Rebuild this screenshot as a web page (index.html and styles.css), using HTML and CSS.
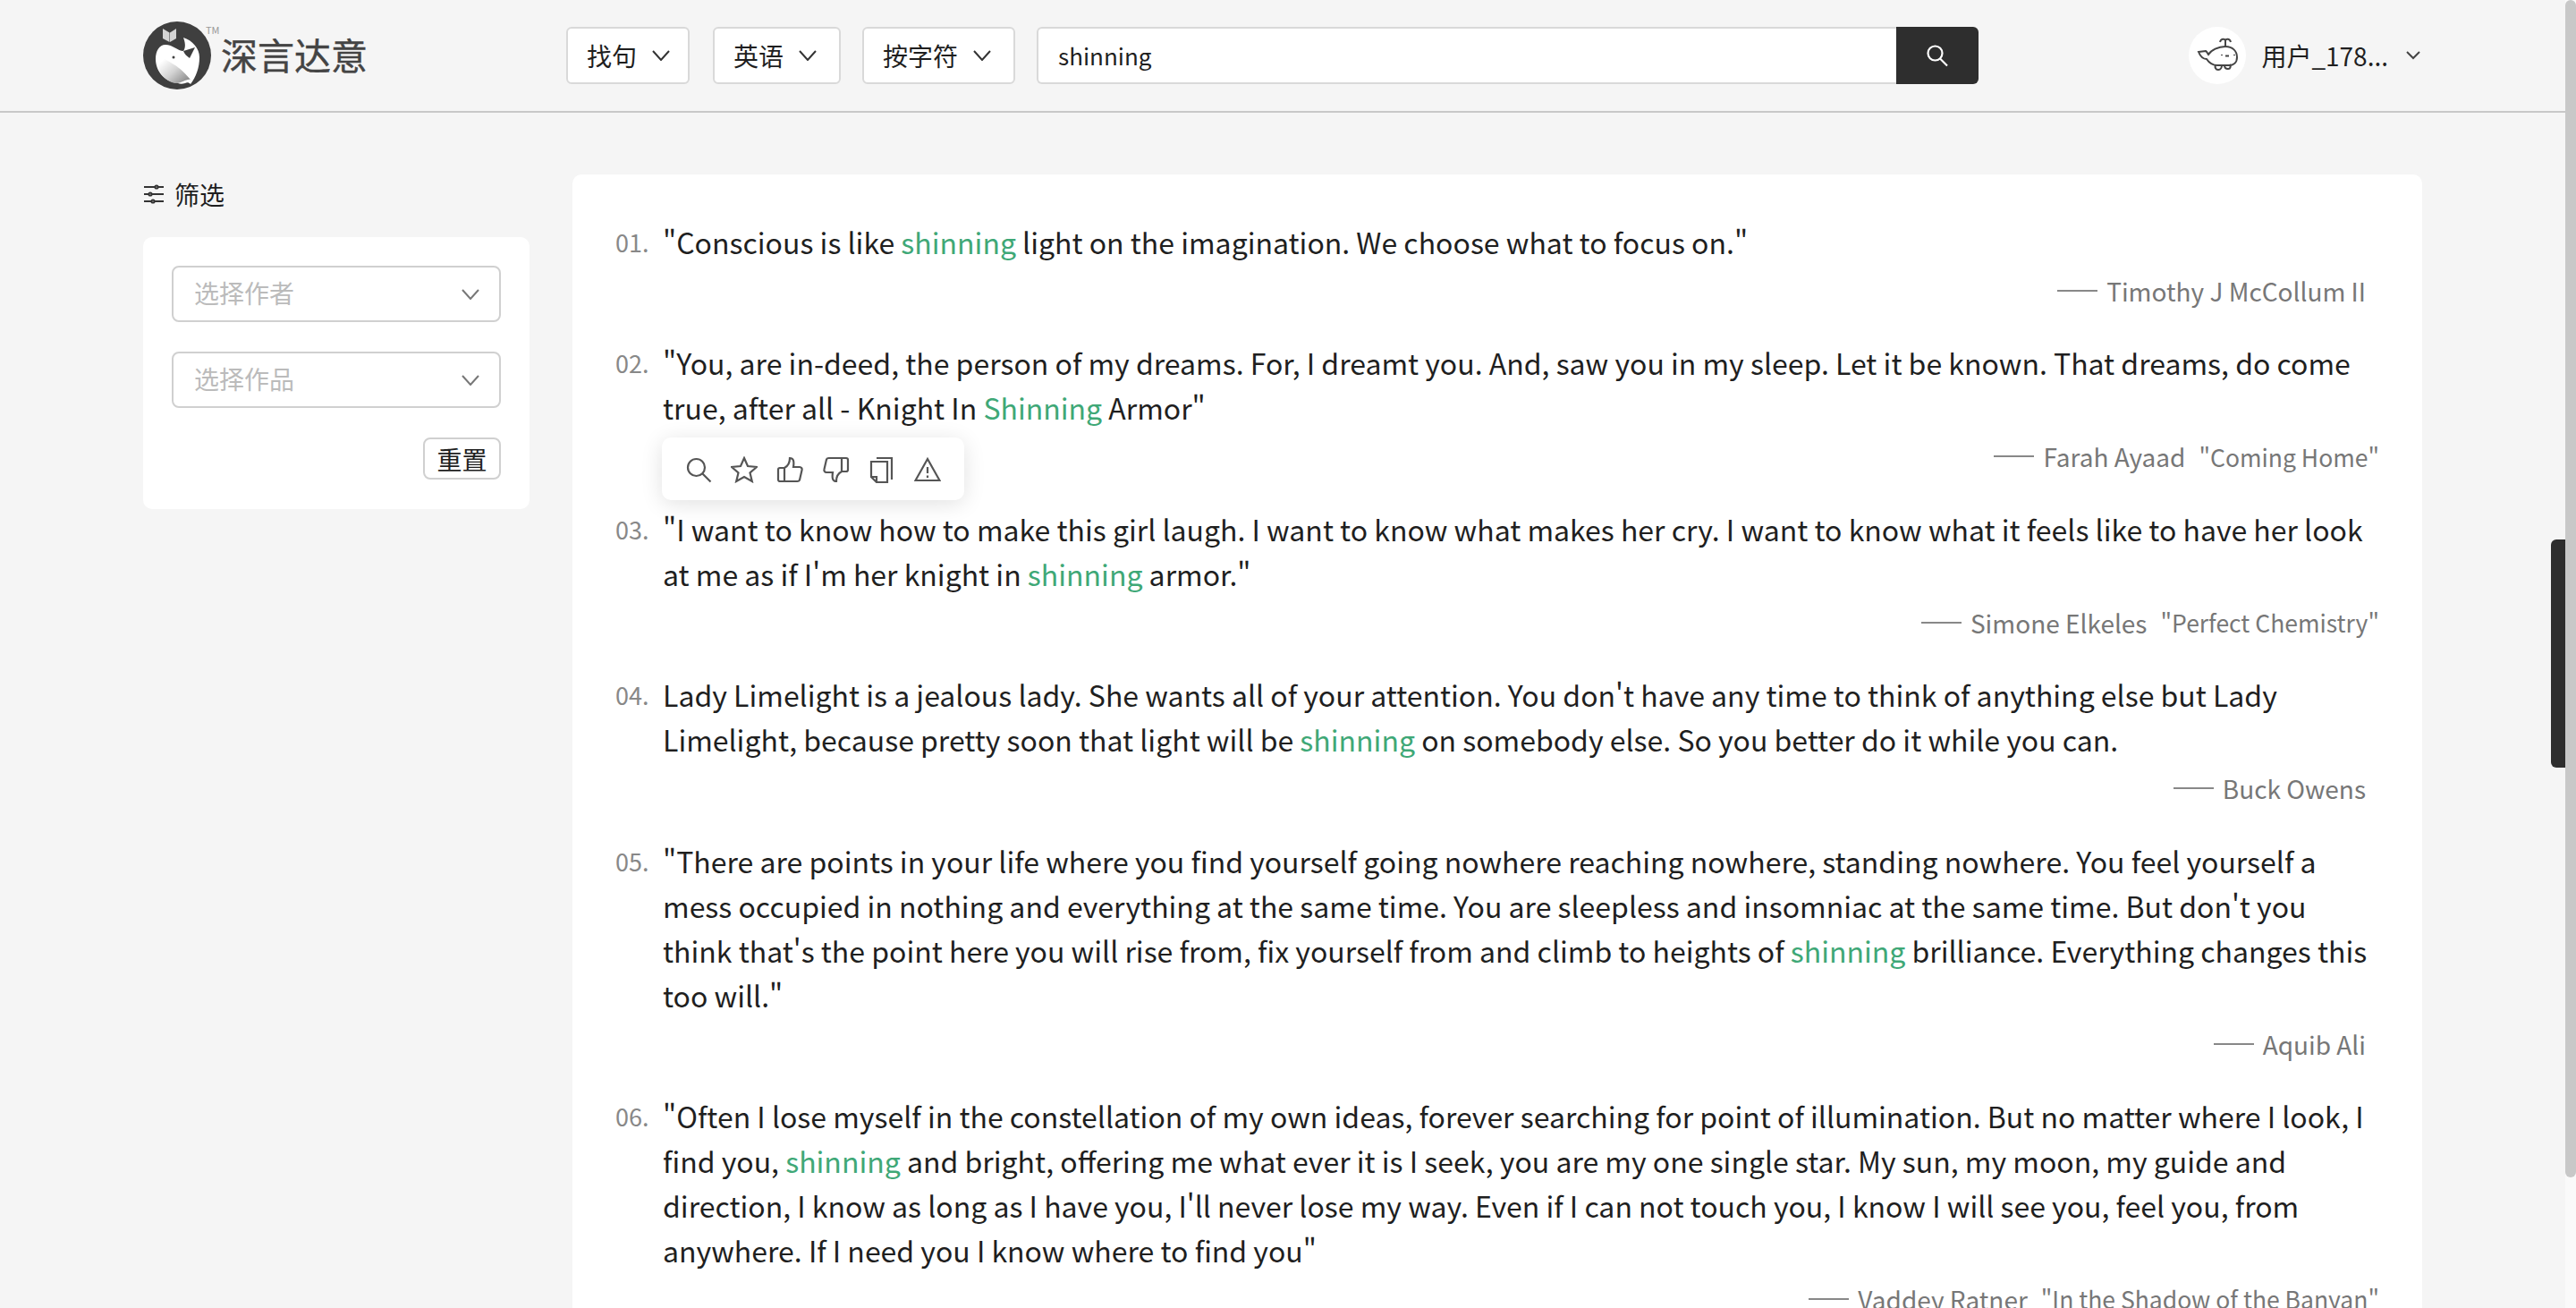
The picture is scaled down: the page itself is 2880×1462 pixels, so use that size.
FILE: index.html
```html
<!DOCTYPE html>
<html lang="zh">
<head>
    <meta charset="UTF-8">
    <meta name="viewport" content="width=device-width, initial-scale=1.0">
    <title>深言达意</title>
    <link rel="stylesheet" href="styles.css">
</head>
<body>
    <div class="page">
        <header class="topbar">
            <div class="logo">
                <svg class="logo-mark" viewBox="0 0 76 76">
                    <defs>
                        <linearGradient id="belly" x1="0.1" y1="0.3" x2="0.8" y2="1">
                            <stop offset="0" stop-color="#fff"/>
                            <stop offset="0.5" stop-color="#d4d4d4"/>
                            <stop offset="1" stop-color="#8e8e8e"/>
                        </linearGradient>
                    </defs>
                    <circle cx="38" cy="38" r="38" fill="#3f3f3f"/>
                    <path d="M22 8l7.500 4.500V23L22 19zM37 8l-7 4.500V23l7-4z" fill="#d4d4d4"/>
                    <path d="M14 42c0-9 4-16 11-16 8 0 14 7 20 7 3-4 2-10 0-15 10 3 18 12 18 22 0 12-4 22-10 30-2-2-4-2-6-1-3 1-6 1-8 0C22 67 14 54 14 42z" fill="#fff"/>
                    <path d="M16 36c8 8 22 10 37 29-5-1-9 4-16 4C24 68 12 52 16 36z" fill="url(#belly)"/>
                    <path d="M45 33l13-4-6 12c-3-2-6-5-7-8z" fill="#3f3f3f"/>
                    <circle cx="34" cy="40" r="1.500" fill="#3f3f3f"/>
                </svg>
                <span class="logo-text">深言达意</span>
                <span class="logo-tm">TM</span>
            </div>
            <div class="search">
                <button class="drop-btn">找句
                    <svg class="chev" viewBox="0 0 20 12"><path d="M1 1l9 10 9-10"/></svg>
                </button>
                <button class="drop-btn">英语
                    <svg class="chev" viewBox="0 0 20 12"><path d="M1 1l9 10 9-10"/></svg>
                </button>
                <button class="drop-btn">按字符
                    <svg class="chev" viewBox="0 0 20 12"><path d="M1 1l9 10 9-10"/></svg>
                </button>
                <div class="search-box">
                    <div class="search-input">shinning</div>
                    <div class="search-go">
                        <svg viewBox="0 0 26 26" class="search-icon"><circle cx="10.500" cy="10.500" r="8"/><path d="M16 16.500l8 8"/></svg>
                    </div>
                </div>
            </div>
            <div class="user">
                <div class="avatar">
                    <svg viewBox="0 0 64 64" class="whale">
                        <path d="M41 22v-8M41 15c-1-2-5-2-6 2M41 15c1-2 5-2 6 2"/>
                        <path d="M11 28l8-1c2 1 2 3 3 4 3-5 11-9 19-9 8 0 13 5 13 12 0 6-4 9-9 9H32c-6 0-10-4-12-7-4 0-7-3-9-8z"/>
                        <path d="M30 43c-1 2 0 5 3 5s4-3 4-5M40 43c0 2 1 4 4 4s3-3 2-5"/>
                        <path d="M37 31v1M51 31v1M41 32.500h4"/>
                    </svg>
                </div>
                <span class="user-name">用户_178...</span>
                <svg class="chev-sm" viewBox="0 0 16 10"><path d="M1 1l7 7 7-7"/></svg>
            </div>
        </header>

        <div class="content">
            <aside class="sidebar">
                <div class="filter-title">
                    <svg viewBox="0 0 24 22" class="filter-icon">
                        <path d="M1 3h22M1 11h22M1 19h22"/>
                        <circle cx="15" cy="3" r="1.600"/><circle cx="8" cy="11" r="1.600"/><circle cx="11" cy="19" r="1.600"/>
                    </svg>
                    筛选
                </div>
                <div class="filter-card">
                    <div class="select"><span class="placeholder">选择作者</span>
                        <svg class="chev chev-grey" viewBox="0 0 20 12"><path d="M1 1l9 10 9-10"/></svg>
                    </div>
                    <div class="select"><span class="placeholder">选择作品</span>
                        <svg class="chev chev-grey" viewBox="0 0 20 12"><path d="M1 1l9 10 9-10"/></svg>
                    </div>
                    <div class="reset-row"><button class="reset">重置</button></div>
                </div>
            </aside>

            <main class="results">
                <div class="item">
                    <span class="num">01.</span>
                    <div class="body">
                        <p class="quote">"Conscious is like <em>shinning</em> light on the imagination. We choose what to focus on."</p>
                        <div class="source"><span class="author">Timothy J McCollum II</span></div>
                    </div>
                </div>
                <div class="item">
                    <span class="num">02.</span>
                    <div class="body">
                        <p class="quote">"You, are in-deed, the person of my dreams. For, I dreamt you. And, saw you in my sleep. Let it be known. That dreams, do come true, after all - Knight In <em>Shinning</em> Armor"</p>
                        <div class="source"><span class="author">Farah Ayaad</span><span class="work">"Coming Home"</span></div>
                    </div>
                    <div class="tools">
                        <svg viewBox="0 0 30 30"><circle cx="12.500" cy="12.500" r="9.500"/><path d="M19.500 19.500l9 9"/></svg>
                        <svg viewBox="0 0 30 30"><path d="M15 2l4 9 10 1-7.500 6.500 2.300 9.500-8.800-5-8.800 5 2.300-9.500L1 12l10-1z"/></svg>
                        <svg viewBox="0 0 30 30"><path d="M9 13v15M2 15a2 2 0 012-2h5c4-2 6-6 6-11 4 0 5 3 4 10h7c2 0 3 2 2.500 3.500l-2.500 11c-.5 1-1 1.500-2.500 1.500H4a2 2 0 01-2-2z"/></svg>
                        <svg viewBox="0 0 30 30"><path d="M21 17V2M28 15a2 2 0 01-2 2h-5c-4 2-6 6-6 11-4 0-5-3-4-10H4c-2 0-3-2-2.500-3.500L4 3.500C4.500 2.500 5 2 6.500 2H26a2 2 0 012 2z"/></svg>
                        <svg viewBox="0 0 30 30"><path d="M9 2h17v24M3 6h18v23H9l-6-6zM3 23h6v6"/></svg>
                        <svg viewBox="0 0 30 30"><path d="M15 3L1.500 27h27zM15 12v7M15 21.500v2.500"/></svg>
                    </div>
                </div>
                <div class="item">
                    <span class="num">03.</span>
                    <div class="body">
                        <p class="quote">"I want to know how to make this girl laugh. I want to know what makes her cry. I want to know what it feels like to have her look at me as if I'm her knight in <em>shinning</em> armor."</p>
                        <div class="source"><span class="author">Simone Elkeles</span><span class="work">"Perfect Chemistry"</span></div>
                    </div>
                </div>
                <div class="item">
                    <span class="num">04.</span>
                    <div class="body">
                        <p class="quote">Lady Limelight is a jealous lady. She wants all of your attention. You don't have any time to think of anything else but Lady Limelight, because pretty soon that light will be <em>shinning</em> on somebody else. So you better do it while you can.</p>
                        <div class="source"><span class="author">Buck Owens</span></div>
                    </div>
                </div>
                <div class="item">
                    <span class="num">05.</span>
                    <div class="body">
                        <p class="quote">"There are points in your life where you find yourself going nowhere reaching nowhere, standing nowhere. You feel yourself a mess occupied in nothing and everything at the same time. You are sleepless and insomniac at the same time. But don't you think that's the point here you will rise from, fix yourself from and climb to heights of <em>shinning</em> brilliance. Everything changes this too will."</p>
                        <div class="source"><span class="author">Aquib Ali</span></div>
                    </div>
                </div>
                <div class="item">
                    <span class="num">06.</span>
                    <div class="body">
                        <p class="quote">"Often I lose myself in the constellation of my own ideas, forever searching for point of illumination. But no matter where I look, I find you, <em>shinning</em> and bright, offering me what ever it is I seek, you are my one single star. My sun, my moon, my guide and direction, I know as long as I have you, I'll never lose my way. Even if I can not touch you, I know I will see you, feel you, from anywhere. If I need you I know where to find you"</p>
                        <div class="source"><span class="author">Vaddey Ratner</span><span class="work">"In the Shadow of the Banyan"</span></div>
                    </div>
                </div>
            </main>
        </div>
    </div>
    <div class="scrollbar">
        <div class="scroll-track"></div>
        <div class="scroll-thumb"></div>
    </div>
</body>
</html>
```

FILE: styles.css
```css
html, body {
    margin: 0;
    height: 100%;
    overflow: hidden;
}

body {
    background: #f5f5f5;
    color: #1f1f1f;
    font-family: "Noto Sans CJK SC", "Noto Sans", sans-serif;
    font-size: 32px;
}

.page {
    height: 1462px;
    overflow: hidden;
}

/* Top bar */
.topbar {
    display: flex;
    align-items: center;
    height: 124px;
    padding: 0 174px 0 160px;
    border-bottom: 2px solid #c8c8c8;
}

.logo {
    position: relative;
    display: flex;
    align-items: center;
    width: 473px;
    flex-shrink: 0;
}

.logo-mark {
    width: 76px;
    height: 76px;
}

.logo-text {
    margin-left: 11px;
    padding-bottom: 5px;
    font-size: 41px;
    line-height: 50px;
    color: #444;
    -webkit-text-stroke: 0.4px #444;
}

.logo-tm {
    position: absolute;
    left: 70px;
    top: 1px;
    font-size: 11px;
    color: #999;
}

.search {
    display: flex;
    gap: 24px;
    width: 1579px;
    flex-shrink: 0;
}

.drop-btn {
    box-sizing: border-box;
    display: flex;
    align-items: center;
    gap: 17px;
    height: 64px;
    padding: 0 0 0 21px;
    background: #fff;
    border: 2px solid #d9d9d9;
    border-radius: 6px;
    color: #1f1f1f;
    font-family: inherit;
    font-size: 28px;
}

.drop-btn:nth-child(1) {
    width: 138px;
    margin-right: 2px;
}

.drop-btn:nth-child(2) {
    width: 143px;
}

.drop-btn:nth-child(3) {
    width: 171px;
}

.chev {
    width: 20px;
    height: 12px;
    fill: none;
    stroke: #333;
    stroke-width: 2;
}

.chev-grey {
    stroke: #777;
}

.search-box {
    display: flex;
    flex: 1;
    height: 64px;
}

.search-input {
    flex: 1;
    padding: 0 22px;
    background: #fff;
    border: 2px solid #d9d9d9;
    border-right: none;
    border-radius: 6px 0 0 6px;
    font-size: 26px;
    line-height: 60px;
}

.search-go {
    display: flex;
    align-items: center;
    justify-content: center;
    width: 92px;
    background: #2e2e2e;
    border-radius: 0 6px 6px 0;
}

.search-icon {
    width: 26px;
    height: 26px;
    fill: none;
    stroke: #fff;
    stroke-width: 2.200;
}

.user {
    display: flex;
    align-items: center;
    margin-left: auto;
}

.avatar {
    width: 64px;
    height: 64px;
    background: #fff;
    border-radius: 50%;
}

.whale {
    display: block;
    width: 64px;
    height: 64px;
    fill: none;
    stroke: #444;
    stroke-width: 2;
}

.user-name {
    margin-left: 17px;
    font-size: 28px;
}

.chev-sm {
    width: 16px;
    height: 10px;
    margin-left: 20px;
    fill: none;
    stroke: #444;
    stroke-width: 2;
}

/* Sidebar and results */
.content {
    display: flex;
    align-items: flex-start;
    padding: 69px 172px 0 160px;
}

.sidebar {
    width: 432px;
    flex-shrink: 0;
    margin-right: 48px;
}

.filter-title {
    display: flex;
    align-items: center;
    gap: 11px;
    height: 26px;
    margin-top: 9px;
    margin-bottom: 35px;
    font-size: 28px;
}

.filter-icon {
    width: 24px;
    height: 22px;
    fill: #fff;
    stroke: #333;
    stroke-width: 2;
}

.filter-card {
    padding: 32px 32px 33px;
    background: #fff;
    border-radius: 10px;
}

.select {
    display: flex;
    align-items: center;
    justify-content: space-between;
    height: 59px;
    margin-bottom: 33px;
    padding: 0 22px 0 23px;
    border: 2px solid #d0d0d0;
    border-radius: 8px;
    color: #bbb;
    font-size: 28px;
}

.placeholder {
    padding-bottom: 3px;
}

.reset-row {
    display: flex;
    justify-content: flex-end;
}

.reset {
    height: 47px;
    width: 87px;
    padding: 0;
    background: #fff;
    border: 2px solid #d0d0d0;
    border-radius: 8px;
    color: #1f1f1f;
    font-family: inherit;
    font-size: 28px;
}

.results {
    flex: 1;
    height: 1300px;
    padding: 50px 48px 0;
    background: #fff;
    border-radius: 10px 10px 0 0;
}

.item {
    position: relative;
    display: flex;
    margin-bottom: 30.400px;
}

.num {
    width: 53px;
    flex-shrink: 0;
    padding-top: 1px;
    color: #888;
    font-size: 27px;
    line-height: 50px;
}

.body {
    flex: 1;
}

.quote {
    margin: 0;
    line-height: 50px;
}

.quote em {
    color: #3fa877;
    font-style: normal;
}

.source {
    display: flex;
    justify-content: flex-end;
    align-items: center;
    height: 50px;
    padding-top: 5px;
    color: #777;
    font-size: 28px;
}

.author {
    display: flex;
    align-items: center;
    margin-right: 15px;
}

.author::before {
    content: "";
    width: 45px;
    height: 2px;
    margin-right: 10px;
    background: #888;
}

.work {
    font-size: 26.500px;
}

.tools {
    position: absolute;
    left: 52px;
    top: 109px;
    display: flex;
    justify-content: space-between;
    box-sizing: border-box;
    width: 338px;
    height: 70px;
    padding: 21px 26px 19px;
    background: #fff;
    border-radius: 10px;
    box-shadow: 0 4px 24px rgba(0, 0, 0, 0.12);
}

.tools svg {
    width: 30px;
    height: 30px;
    fill: none;
    stroke: #555;
    stroke-width: 2.200;
}

/* Scrollbar */
.scrollbar {
    position: fixed;
    top: 0;
    right: 0;
    width: 12px;
    height: 100%;
    background: #fafafa;
}

.scroll-track {
    height: 1316px;
    background: #c8c8c8;
    border-radius: 6px;
}

.scroll-thumb {
    position: absolute;
    top: 603px;
    right: 12px;
    width: 16px;
    height: 255px;
    background: #2e2e2e;
    border-radius: 6px 0 0 6px;
}
```
